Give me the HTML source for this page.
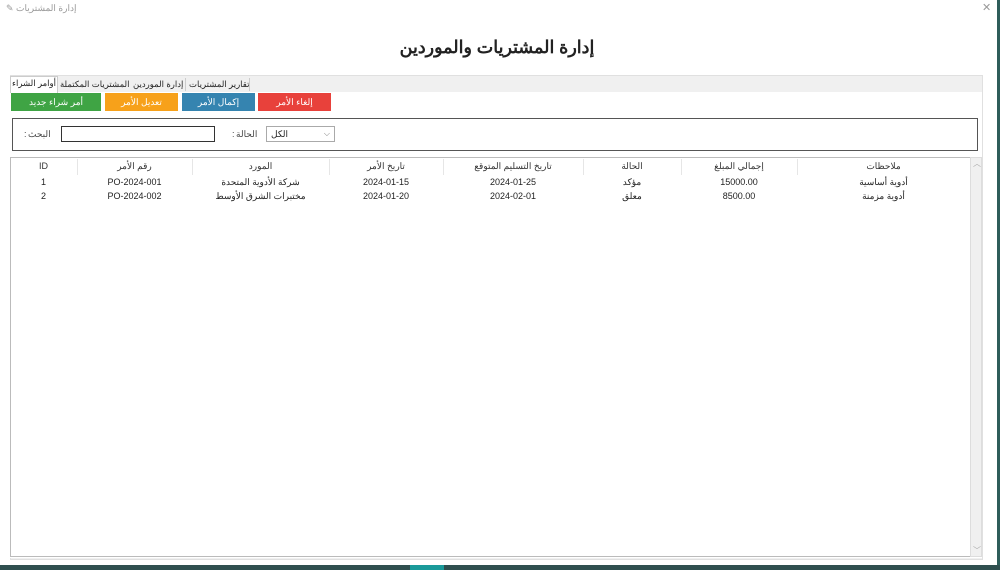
<!DOCTYPE html>
<html><head><meta charset="utf-8"><style>
*{margin:0;padding:0;box-sizing:border-box}
body{width:1000px;height:570px;overflow:hidden;background:#fff;font-family:"Liberation Sans","Noto Sans CJK SC",sans-serif;position:relative;color:#222}
.a{position:absolute}
.t{font-size:10px;white-space:nowrap}
.btn{position:absolute;top:93px;height:18px;color:#fff;font-size:9px;text-align:center;line-height:18px}
.hd{position:absolute;top:158px;height:16px;font-size:9px;text-align:center;line-height:16px;color:#333}
.c{position:absolute;font-size:9px;text-align:center;color:#222}
.sep{position:absolute;top:159px;width:1px;height:16px;background:#e6e6e6}
.tab{position:absolute;top:79px;font-size:8.5px;white-space:nowrap;direction:rtl}
</style></head><body>
<div class="a" style="left:997px;top:0;width:3px;height:570px;background:#2e5d5a"></div>
<div class="a" style="left:0;top:565px;width:1000px;height:5px;background:#2f4f4f"></div>
<div class="a" style="left:410px;top:565px;width:34px;height:5px;background:#1a9a9a"></div>
<div class="a t" style="left:6px;top:3px;color:#999;font-size:9px">✎ <span dir="rtl">إدارة المشتريات</span></div>
<div class="a" style="left:982px;top:1px;color:#999;font-size:11px">✕</div>
<div class="a" style="left:0;top:37px;width:994px;text-align:center;font-size:17.5px;font-weight:bold;color:#222;direction:rtl">إدارة المشتريات والموردين</div>
<div class="a" style="left:10px;top:75px;width:973px;height:485px;background:#f0f0f0;border:1px solid #e0e0e0"></div>
<div class="a" style="left:10px;top:92px;width:972px;height:466px;background:#fff"></div>
<div class="a" style="left:10px;top:76px;width:48px;height:17px;background:#fff;border:1px solid #ccc;border-bottom:none"></div>
<div class="tab" style="left:12px;top:78px">أوامر الشراء</div>
<div class="tab" style="left:60px">المشتريات المكتملة</div>
<div class="tab" style="left:133px">إدارة الموردين</div>
<div class="tab" style="left:189px">تقارير المشتريات</div>
<div class="a" style="left:185px;top:78px;width:1px;height:13px;background:#ccc"></div>
<div class="a" style="left:249px;top:78px;width:1px;height:13px;background:#ccc"></div>
<div class="btn" style="left:11px;width:90px;background:#3fa444">أمر شراء جديد</div>
<div class="btn" style="left:105px;width:73px;background:#f7a11a">تعديل الأمر</div>
<div class="btn" style="left:182px;width:73px;background:#3584b0">إكمال الأمر</div>
<div class="btn" style="left:258px;width:73px;background:#e8413b">إلغاء الأمر</div>
<div class="a" style="left:12px;top:118px;width:966px;height:33px;border:1px solid #555"></div>
<div class="a t" style="left:24px;top:129px;font-size:9px;color:#444">:</div>
<div class="a t" style="left:28px;top:129px;font-size:9px;color:#444">البحث</div>
<div class="a" style="left:61px;top:126px;width:154px;height:16px;border:1px solid #333"></div>
<div class="a t" style="left:232px;top:129px;font-size:9px;color:#444">:</div>
<div class="a t" style="left:236px;top:129px;font-size:9px;color:#444">الحالة</div>
<div class="a" style="left:266px;top:126px;width:69px;height:16px;border:1px solid #aaa;font-size:9px;line-height:14px;padding-left:4px">الكل<span style="position:absolute;right:4px;color:#777;font-size:8px">⌵</span></div>
<div class="a" style="left:10px;top:157px;width:961px;height:400px;border:1px solid #bbb"></div>
<div class="a" style="left:970px;top:157px;width:12px;height:400px;background:#f0f0f0;border:1px solid #ddd"></div>
<div class="a" style="left:973px;top:158px;font-size:8px;color:#aaa">︿</div>
<div class="a" style="left:973px;top:545px;font-size:8px;color:#aaa">﹀</div>
<div class="hd" style="left:10px;width:67px">ID</div>
<div class="hd" style="left:77px;width:115px">رقم الأمر</div>
<div class="hd" style="left:192px;width:137px">المورد</div>
<div class="hd" style="left:329px;width:114px">تاريخ الأمر</div>
<div class="hd" style="left:443px;width:140px">تاريخ التسليم المتوقع</div>
<div class="hd" style="left:583px;width:98px">الحالة</div>
<div class="hd" style="left:681px;width:116px">إجمالي المبلغ</div>
<div class="hd" style="left:797px;width:173px">ملاحظات</div>
<div class="sep" style="left:77px"></div><div class="sep" style="left:192px"></div><div class="sep" style="left:329px"></div><div class="sep" style="left:443px"></div><div class="sep" style="left:583px"></div><div class="sep" style="left:681px"></div><div class="sep" style="left:797px"></div>
<div class="c" style="top:177px;left:10px;width:67px">1</div>
<div class="c" style="top:177px;left:77px;width:115px">PO-2024-001</div>
<div class="c" style="top:177px;left:192px;width:137px">شركة الأدوية المتحدة</div>
<div class="c" style="top:177px;left:329px;width:114px">2024-01-15</div>
<div class="c" style="top:177px;left:443px;width:140px">2024-01-25</div>
<div class="c" style="top:177px;left:583px;width:98px">مؤكد</div>
<div class="c" style="top:177px;left:681px;width:116px">15000.00</div>
<div class="c" style="top:177px;left:797px;width:173px">أدوية أساسية</div>
<div class="c" style="top:191px;left:10px;width:67px">2</div>
<div class="c" style="top:191px;left:77px;width:115px">PO-2024-002</div>
<div class="c" style="top:191px;left:192px;width:137px">مختبرات الشرق الأوسط</div>
<div class="c" style="top:191px;left:329px;width:114px">2024-01-20</div>
<div class="c" style="top:191px;left:443px;width:140px">2024-02-01</div>
<div class="c" style="top:191px;left:583px;width:98px">معلق</div>
<div class="c" style="top:191px;left:681px;width:116px">8500.00</div>
<div class="c" style="top:191px;left:797px;width:173px">أدوية مزمنة</div>
</body></html>
